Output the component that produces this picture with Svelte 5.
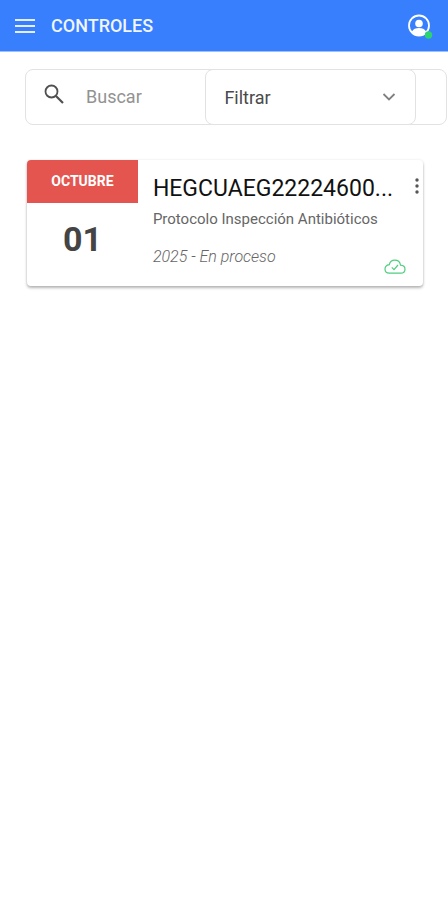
<script>
	let search = $state('');
	let filter = $state('');

	let controls = [
		{
			month: 'OCTUBRE',
			day: '01',
			code: 'HEGCUAEG22224600...',
			protocol: 'Protocolo Inspección Antibióticos',
			status: '2025 - En proceso',
		},
	];
</script>

<header>
	<button class="iconButton" aria-label="Menú">
		<svg width="22" height="16" viewBox="0 0 22 16">
			<path d="M1 2h20M1 8h20M1 14h20" stroke="#e4eeff" stroke-width="2" />
		</svg>
	</button>
	<h1>CONTROLES</h1>
	<button class="iconButton account" aria-label="Cuenta">
		<svg width="26" height="26" viewBox="0 0 26 26">
			<circle cx="11" cy="12.500" r="10" fill="none" stroke="#fff" stroke-width="1.800" />
			<circle cx="11" cy="10.500" r="3.800" fill="#fff" />
			<path d="M3.800 18.700c1.400-2.600 4-3.600 7.200-3.600s5.800 1 7.200 3.600C16.600 21.100 14 22.500 11 22.500s-5.600-1.400-7.200-3.800z" fill="#fff" />
			<circle cx="20.500" cy="22" r="3.700" fill="#2dd36f" />
		</svg>
	</button>
</header>

<main>
	<div class="toolbar">
		<label class="search">
			<svg width="20" height="20" viewBox="0 0 20 20">
				<circle cx="7.500" cy="7.500" r="6" fill="none" stroke="#505050" stroke-width="1.800" />
				<path d="M12 12l7 7" stroke="#505050" stroke-width="2.200" />
			</svg>
			<input type="text" placeholder="Buscar" aria-label="Buscar" bind:value={search} />
		</label>
		<div class="filter">
			<select aria-label="Filtrar" bind:value={filter}>
				<option value="">Filtrar</option>
			</select>
			<svg width="14" height="10" viewBox="0 0 14 10">
				<path d="M1.500 2L7 7.500 12.500 2" fill="none" stroke="#808080" stroke-width="1.800" />
			</svg>
		</div>
	</div>

	{#each controls as control}
		<article class="card">
			<div class="date">
				<p class="month">{control.month}</p>
				<p class="day">{control.day}</p>
			</div>
			<div class="info">
				<h2>{control.code}</h2>
				<p class="protocol">{control.protocol}</p>
				<p class="status">{control.status}</p>
			</div>
			<div class="actions">
				<button class="iconButton" aria-label="Opciones">
					<svg width="4" height="16" viewBox="0 0 4 16">
						<circle cx="2" cy="2" r="1.700" fill="#555" />
						<circle cx="2" cy="8" r="1.700" fill="#555" />
						<circle cx="2" cy="14" r="1.700" fill="#555" />
					</svg>
				</button>
				<svg class="cloud" width="22" height="16" viewBox="0 0 22 16">
					<path
						d="M5.300 5.600C5.900 3 8.100 1.200 10.800 1.200c3 0 5.200 2 5.700 4.900 2.600.2 4.500 1.700 4.500 4.100 0 2.500-1.900 4-4.400 4H5.200C2.700 14.200 1 12.500 1 10.100c0-2.400 1.800-4.100 4.300-4.500z"
						fill="none"
						stroke="#4fce7f"
						stroke-width="1.200"
					/>
					<path d="M7.800 8.400l2.200 2.200 4-4.600" fill="none" stroke="#4fce7f" stroke-width="1.200" />
				</svg>
			</div>
		</article>
	{/each}
</main>

<style>
	:global(body) {
		margin: 0;
		background: #fff;
		font-family: Roboto, sans-serif;
	}

	h1,
	h2,
	p {
		margin: 0;
	}

	svg {
		display: block;
		flex-shrink: 0;
	}

	header {
		display: flex;
		align-items: center;
		height: 51px;
		padding: 0 14px;
		background: #387ffe;
		border-bottom: 1px solid #9dc0ff;
	}

	h1 {
		margin-left: 15px;
		color: #f0f5ff;
		font-size: 18px;
		font-weight: 500;
		line-height: 24px;
	}

	.iconButton {
		padding: 0;
		border: none;
		background: transparent;
		cursor: pointer;
	}

	.account {
		margin-left: auto;
	}

	main {
		padding-bottom: 24px;
	}

	.toolbar {
		display: flex;
		box-sizing: border-box;
		height: 56px;
		margin: 17px 1px 0 25px;
		padding-right: 30px;
		border: 1px solid #e2e2e2;
		border-radius: 8px;
	}

	.search {
		display: flex;
		flex: 1;
		align-items: center;
		min-width: 0;
		padding-left: 18px;
		gap: 22px;
	}

	.search svg {
		margin-bottom: 6px;
	}

	.search input {
		flex: 1;
		min-width: 0;
		padding: 0;
		border: none;
		outline: none;
		background: transparent;
		color: #333;
		font-family: inherit;
		font-size: 18px;
		line-height: 24px;
	}

	.search input::placeholder {
		color: #929292;
		opacity: 1;
	}

	.filter {
		display: grid;
		flex: 0 0 54%;
		align-items: center;
		box-sizing: border-box;
		margin: -1px 0;
		border: 1px solid #e2e2e2;
		border-radius: 8px;
		background: #fff;
	}

	.filter select,
	.filter svg {
		grid-area: 1 / 1;
	}

	.filter select {
		width: 100%;
		height: 100%;
		padding: 0 40px 0 18px;
		border: none;
		outline: none;
		appearance: none;
		background: transparent;
		color: #4a4a4a;
		font-family: inherit;
		font-size: 18px;
	}

	.filter svg {
		justify-self: end;
		margin-right: 19px;
		pointer-events: none;
	}

	.card {
		display: flex;
		min-height: 126px;
		margin: 35px 25px 0 27px;
		overflow: hidden;
		border-radius: 4px;
		background: #fff;
		box-shadow: 0 2px 3px rgba(0, 0, 0, 0.28), 0 0 3px rgba(0, 0, 0, 0.08);
	}

	.date {
		flex: 0 0 28%;
		text-align: center;
	}

	.month {
		background: #e5554f;
		color: #fff;
		font-size: 14px;
		font-weight: 700;
		line-height: 43px;
	}

	.day {
		padding-top: 16px;
		color: #444;
		font-size: 34px;
		font-weight: 700;
		line-height: 40px;
	}

	.info {
		flex: 1;
		min-width: 0;
		padding: 15px 0 0 15px;
	}

	h2 {
		overflow: hidden;
		color: #111;
		font-size: 23px;
		font-weight: 400;
		line-height: 28px;
		text-overflow: ellipsis;
		white-space: nowrap;
	}

	.protocol {
		padding-top: 6px;
		color: #666;
		font-size: 15px;
		line-height: 20px;
		white-space: nowrap;
	}

	.status {
		padding-top: 17px;
		color: #666;
		font-size: 16px;
		font-style: italic;
		font-weight: 300;
		line-height: 22px;
	}

	.actions {
		display: flex;
		flex-direction: column;
		align-items: flex-end;
		justify-content: space-between;
		width: 22px;
		padding: 18px 4px 11px 0;
	}

	.cloud {
		margin-right: 13px;
	}
</style>
